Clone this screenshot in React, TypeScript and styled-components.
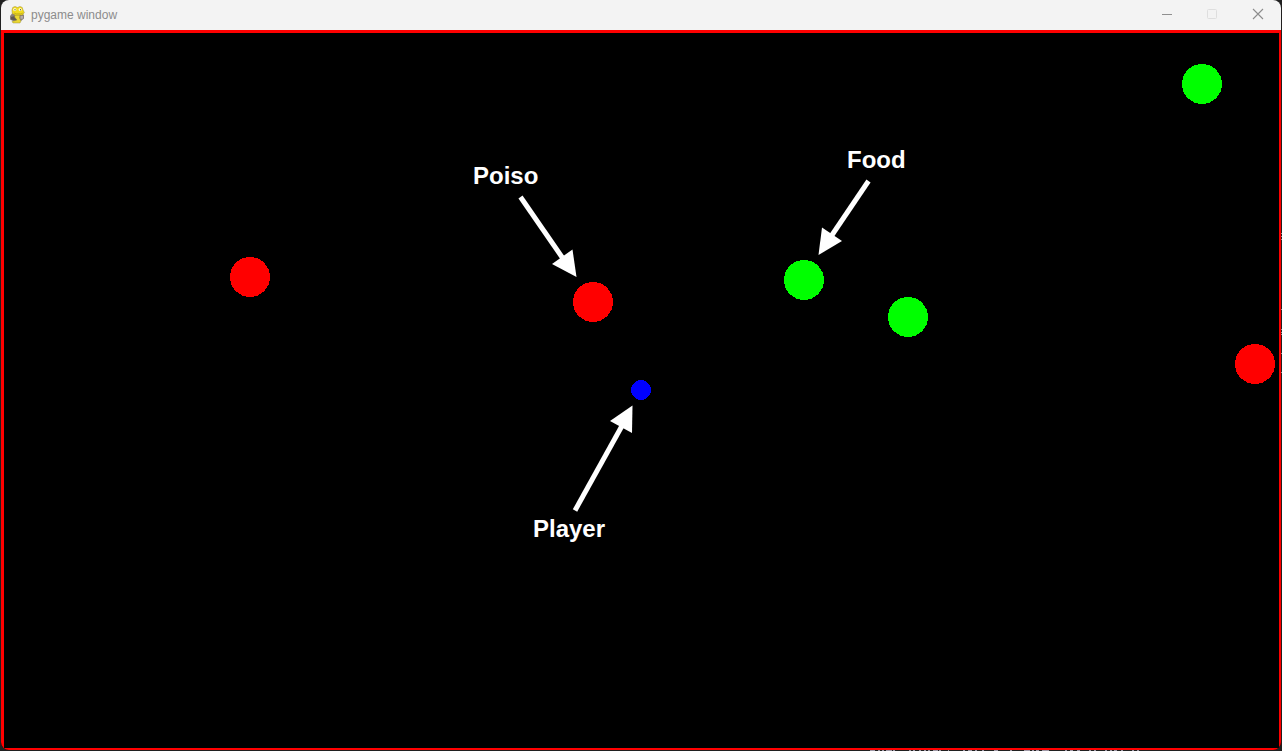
import React from "react";
import styled, { createGlobalStyle } from "styled-components";

const GlobalStyle = createGlobalStyle`
  * { box-sizing: border-box; }
  html, body { margin: 0; background: #202020; }
`;

const Desktop = styled.div`
  position: relative;
  display: flex;
  min-height: 100vh;
  padding: 0 1px 1px;
  background: #202020;
  overflow: hidden;
`;

const Window = styled.main`
  display: flex;
  flex: 1;
  flex-direction: column;
  min-width: 0;
  border-radius: 8px;
  overflow: hidden;
  background: #000;
`;

const TitleBar = styled.header`
  display: flex;
  align-items: center;
  height: 30px;
  padding-left: 8px;
  background: #f3f3f3;
`;

const Title = styled.h1`
  flex: 1;
  margin: 0 0 0 6px;
  color: #8c8c8c;
  font: 400 12px/16px "Liberation Sans", Arial, sans-serif;
`;

const AppIcon = styled.svg`
  display: block;
  width: 16px;
  height: 18px;
`;

const Controls = styled.div`
  display: flex;
  height: 30px;
`;

const ControlButton = styled.button<{ $color: string }>`
  display: flex;
  align-items: center;
  justify-content: center;
  width: 46px;
  height: 28px;
  padding: 0;
  border: 0;
  background: transparent;
  color: ${(p) => p.$color};

  svg {
    display: block;
    width: 12px;
    height: 12px;
    fill: none;
    stroke: currentColor;
  }
`;

const Stage = styled.section`
  position: relative;
  flex: 1;
  min-height: 720px;
  background: #000;
  overflow: hidden;

  &::after {
    content: "";
    position: absolute;
    inset: 0;
    border: solid #f00;
    border-width: 3px 2px 2px 3px;
    pointer-events: none;
  }
`;

const Field = styled.svg`
  position: absolute;
  top: 0;
  left: 0;
  width: 1280px;
  height: 720px;
`;

const Label = styled.span<{ $x: number; $y: number }>`
  position: absolute;
  left: ${(p) => p.$x}px;
  top: ${(p) => p.$y}px;
  color: #fff;
  font: 700 24px/28px "Liberation Sans", Arial, sans-serif;
`;

const Backdrop = styled.svg`
  position: absolute;
  right: 0;
  bottom: 0;
  width: 1282px;
  height: 751px;
  pointer-events: none;
`;

const balls = [
  { x: 249, y: 247, r: 20, color: "#f00" },
  { x: 592, y: 272, r: 20, color: "#f00" },
  { x: 1254, y: 334, r: 20, color: "#f00" },
  { x: 1201, y: 54, r: 20, color: "#0f0" },
  { x: 803, y: 250, r: 20, color: "#0f0" },
  { x: 907, y: 287, r: 20, color: "#0f0" },
  { x: 640, y: 360, r: 10, color: "#00f" },
];

const arrows = [
  { shaft: "M519.5 167L563 230", head: "575.5,247 571.5,219.5 551,234" },
  { shaft: "M867.5 151L829 208", head: "817.5,225 821,197.5 841,211" },
  { shaft: "M574 480.5L622 394", head: "631.5,375.5 609,391 631,403" },
];

const labels = [
  { text: "Poiso", x: 472, y: 132 },
  { text: "Food", x: 846, y: 116 },
  { text: "Player", x: 532, y: 485 },
];

const bottomSpecks = [
  [870, 5], [878, 2], [882, 2], [886, 6], [893, 2], [909, 2], [913, 2],
  [919, 2], [924, 2], [928, 2], [933, 5], [939, 2], [948, 1], [963, 2],
  [968, 4], [975, 2], [982, 2], [994, 4], [1010, 2], [1024, 6], [1032, 2],
  [1036, 3], [1042, 7], [1065, 2], [1070, 3], [1077, 3], [1089, 2],
  [1094, 2], [1105, 2], [1110, 2], [1114, 3], [1121, 2], [1132, 2], [1137, 2],
];
const sideSpecks = [233, 236, 239, 309, 329, 332, 334, 353, 372];

export default function App() {
  return (
    <Desktop>
      <GlobalStyle />
      <Window>
        <TitleBar>
          <AppIcon viewBox="0 0 16 18" aria-hidden="true">
            <path d="M3 7.500L1 10v3.500l3 1.500h8l3-2.500V9l-2-1.500z" fill="#8a817c" />
            <path d="M2 11l4-1 3 3-2 1.500-5-1z" fill="#5f5954" />
            <path d="M11.500 10H14v2.500L11.500 13z" fill="#b5acaa" />
            <path d="M6 9h5l-.5 3 1.500 3-1 2H4l-1-1.500 5-1.500-2.500-3z" fill="#ead733" stroke="#8c7d28" strokeWidth=".4" />
            <path d="M3 4l.8-2.600L6 .5l2.500 1 2.500-1 2.200.9L14 4l1.300 2.500L13.500 9H6L3.300 7.500z" fill="#f2dc1e" stroke="#a08f22" strokeWidth=".5" />
            <circle cx="5.800" cy="3.500" r="1.600" fill="#fff9c8" />
            <circle cx="11.200" cy="3.500" r="1.600" fill="#fff9c8" />
            <path d="M5.500 3.200h1v1h-1zM11 3.200h1v1h-1z" fill="#4a4520" />
            <path d="M5 7l2.500.8h4L14 7" fill="none" stroke="#a99a22" strokeWidth=".6" />
          </AppIcon>
          <Title>pygame window</Title>
          <Controls>
            <ControlButton $color="#8f8f8f" aria-label="Minimize">
              <svg viewBox="0 0 12 12"><path d="M2 6.5h10" /></svg>
            </ControlButton>
            <ControlButton $color="#dedede" aria-label="Maximize" disabled>
              <svg viewBox="0 0 12 12"><rect x="1.5" y="1.5" width="9" height="9" rx="1" /></svg>
            </ControlButton>
            <ControlButton $color="#8c8c8c" aria-label="Close">
              <svg viewBox="0 0 12 12"><path d="M1 1l10 10M11 1L1 11" strokeWidth="1.1" /></svg>
            </ControlButton>
          </Controls>
        </TitleBar>
        <Stage>
          <Field viewBox="0 0 1280 720" aria-hidden="true">
            {balls.map((b) => (
              <circle key={`${b.x}-${b.y}`} cx={b.x} cy={b.y} r={b.r} fill={b.color} shapeRendering="crispEdges" />
            ))}
            {arrows.map((a) => (
              <g key={a.shaft}>
                <path d={a.shaft} stroke="#fff" strokeWidth="5" />
                <polygon points={a.head} fill="#fff" />
              </g>
            ))}
          </Field>
          {labels.map((l) => (
            <Label key={l.text} $x={l.x} $y={l.y}>{l.text}</Label>
          ))}
        </Stage>
      </Window>
      <Backdrop viewBox="0 0 1282 751" aria-hidden="true">
        {bottomSpecks.map(([x, w]) => (
          <rect key={x} x={x} y="750" width={w} height="1" fill="#a09aa8" />
        ))}
        {sideSpecks.map((y) => (
          <rect key={y} x="1281" y={y} width="1" height="1" fill="#9a9a9a" />
        ))}
      </Backdrop>
    </Desktop>
  );
}
